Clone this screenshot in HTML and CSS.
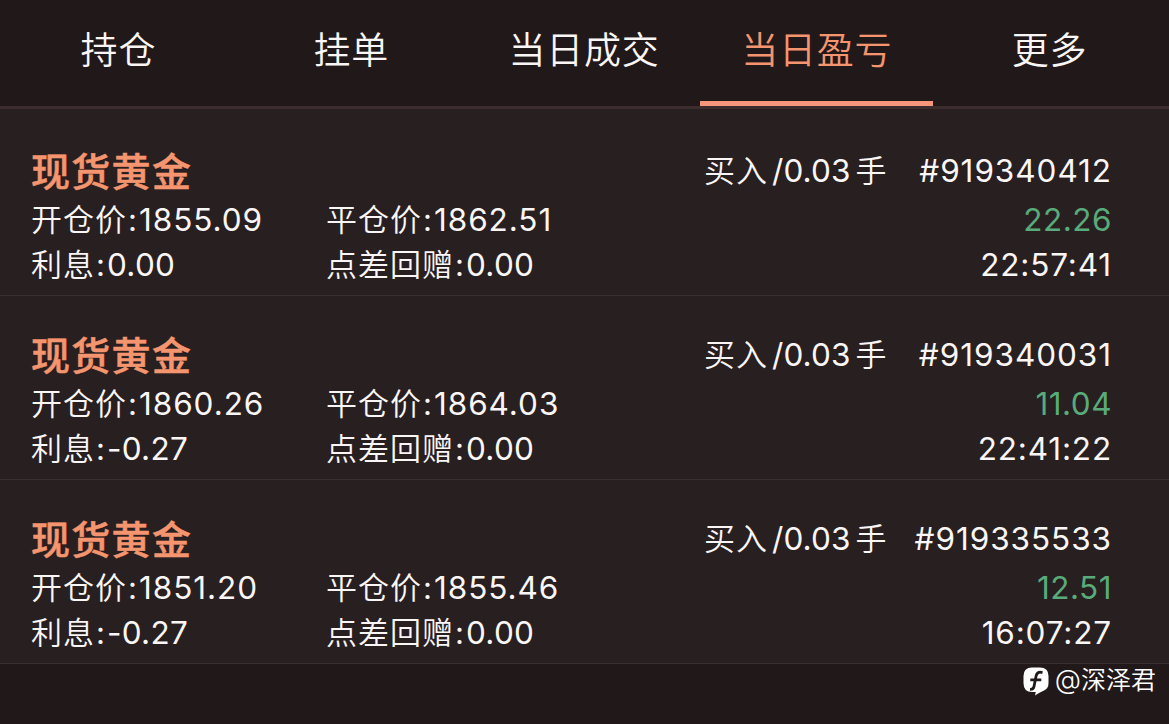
FILE: index.html
```
<!DOCTYPE html>
<html lang="zh-CN">

<head>
    <meta charset="UTF-8">
    <title>当日盈亏</title>
    <link rel="stylesheet" href="styles.css">
</head>

<body>

    <nav class="tabs">
        <a class="tab">持仓</a>
        <a class="tab">挂单</a>
        <a class="tab">当日成交</a>
        <a class="tab active">当日盈亏</a>
        <a class="tab">更多</a>
    </nav>

    <main class="orders">
        <section class="order">
            <div class="line top">
                <h2 class="name">现货黄金</h2>
                <span class="lots">买入<span class="num slash">/0.03</span>手</span>
                <span class="num right">#919340412</span>
            </div>
            <div class="line">
                <span>开仓价<span class="colon">:</span><span class="num">1855.09</span></span>
                <span>平仓价<span class="colon">:</span><span class="num">1862.51</span></span>
                <span class="num right profit">22.26</span>
            </div>
            <div class="line last">
                <span>利息<span class="colon">:</span><span class="num">0.00</span></span>
                <span>点差回赠<span class="colon">:</span><span class="num">0.00</span></span>
                <span class="num right">22:57:41</span>
            </div>
        </section>

        <section class="order">
            <div class="line top">
                <h2 class="name">现货黄金</h2>
                <span class="lots">买入<span class="num slash">/0.03</span>手</span>
                <span class="num right">#919340031</span>
            </div>
            <div class="line">
                <span>开仓价<span class="colon">:</span><span class="num">1860.26</span></span>
                <span>平仓价<span class="colon">:</span><span class="num">1864.03</span></span>
                <span class="num right profit">11.04</span>
            </div>
            <div class="line last">
                <span>利息<span class="colon">:</span><span class="num">-0.27</span></span>
                <span>点差回赠<span class="colon">:</span><span class="num">0.00</span></span>
                <span class="num right">22:41:22</span>
            </div>
        </section>

        <section class="order">
            <div class="line top">
                <h2 class="name">现货黄金</h2>
                <span class="lots">买入<span class="num slash">/0.03</span>手</span>
                <span class="num right">#919335533</span>
            </div>
            <div class="line">
                <span>开仓价<span class="colon">:</span><span class="num">1851.20</span></span>
                <span>平仓价<span class="colon">:</span><span class="num">1855.46</span></span>
                <span class="num right profit">12.51</span>
            </div>
            <div class="line last">
                <span>利息<span class="colon">:</span><span class="num">-0.27</span></span>
                <span>点差回赠<span class="colon">:</span><span class="num">0.00</span></span>
                <span class="num right">16:07:27</span>
            </div>
        </section>
    </main>

    <footer class="author">
        <svg class="logo" width="26" height="29" viewBox="0 0 26 29">
            <path d="M9 0.5H17Q25.5 0.5 25.5 9V16Q25.5 21.5 21 23.5Q16.5 25.5 12 28.5L12.8 25H9Q0.5 25 0.5 16V9Q0.5 0.5 9 0.5Z" fill="#fff" />
            <path d="M19.5 5.6C15.5 4.4 13.8 6 13.1 9L11 19.5C10.6 21.8 9.5 22.6 7 22.4M7.3 12.8H18.3" fill="none" stroke="#211819" stroke-width="2.8" />
        </svg>
        <span><span class="at">@</span>深泽君</span>
    </footer>

</body>

</html>
```
FILE: styles.css
```
body {
    margin: 0;
    height: 724px;
    overflow: hidden;
    background-color: #211819;
    color: #faf6f6;
    font-family: Inter, "Noto Sans CJK SC", sans-serif;
    font-weight: 350;
}

.tabs {
    display: flex;
    height: 106px;
    padding: 0 3px 0 2px;
    border-bottom: 3px solid #3d2c2e;
}

.tab {
    flex: 1;
    box-sizing: border-box;
    height: 106px;
    border-bottom: 5px solid transparent;
    text-align: center;
    font-size: 37px;
    letter-spacing: 0.8px;
    line-height: 101px;
}

.tab.active {
    color: #f4956f;
    border-bottom-color: #f6967a;
}

.orders {
    padding-top: 3px;
    background-color: #281f20;
}

.order {
    box-sizing: border-box;
    height: 184px;
    padding: 34px 57px 0 31px;
    border-bottom: 1px solid #3a2f30;
}

.line {
    display: grid;
    grid-template-columns: 295px 1fr auto;
    height: 45px;
    font-size: 31px;
    letter-spacing: 1px;
    line-height: 46px;
    white-space: nowrap;
}

.line.top {
    grid-template-columns: 673px 1fr auto;
    height: 51px;
    line-height: 49px;
}

.name {
    margin: 0;
    color: #f4956f;
    font-size: 39px;
    font-weight: 500;
    letter-spacing: 1.3px;
    line-height: 52px;
    -webkit-text-stroke: 0.5px #f4956f;
}

.num {
    font-size: 31.5px;
    font-weight: 400;
    letter-spacing: 0.95px;
}

.last .num {
    letter-spacing: 0.3px;
}

.last .num.right {
    letter-spacing: 0.85px;
}

.colon {
    margin: 0 1px;
    font-weight: 400;
}

.num.slash {
    margin: 0 5px 0 4px;
    letter-spacing: 0.1px;
}

.right {
    text-align: right;
}

.num.profit {
    color: #58ab7b;
    letter-spacing: 0.5px;
}

.author {
    display: flex;
    justify-content: flex-end;
    gap: 6px;
    padding: 0 13px 0 0;
    color: #fff;
    font-family: "Noto Sans CJK SC", sans-serif;
    font-size: 25px;
    line-height: 28px;
}

.at {
    font-family: Inter, sans-serif;
    font-size: 27px;
}

.logo {
    margin-top: 3px;
}
```
